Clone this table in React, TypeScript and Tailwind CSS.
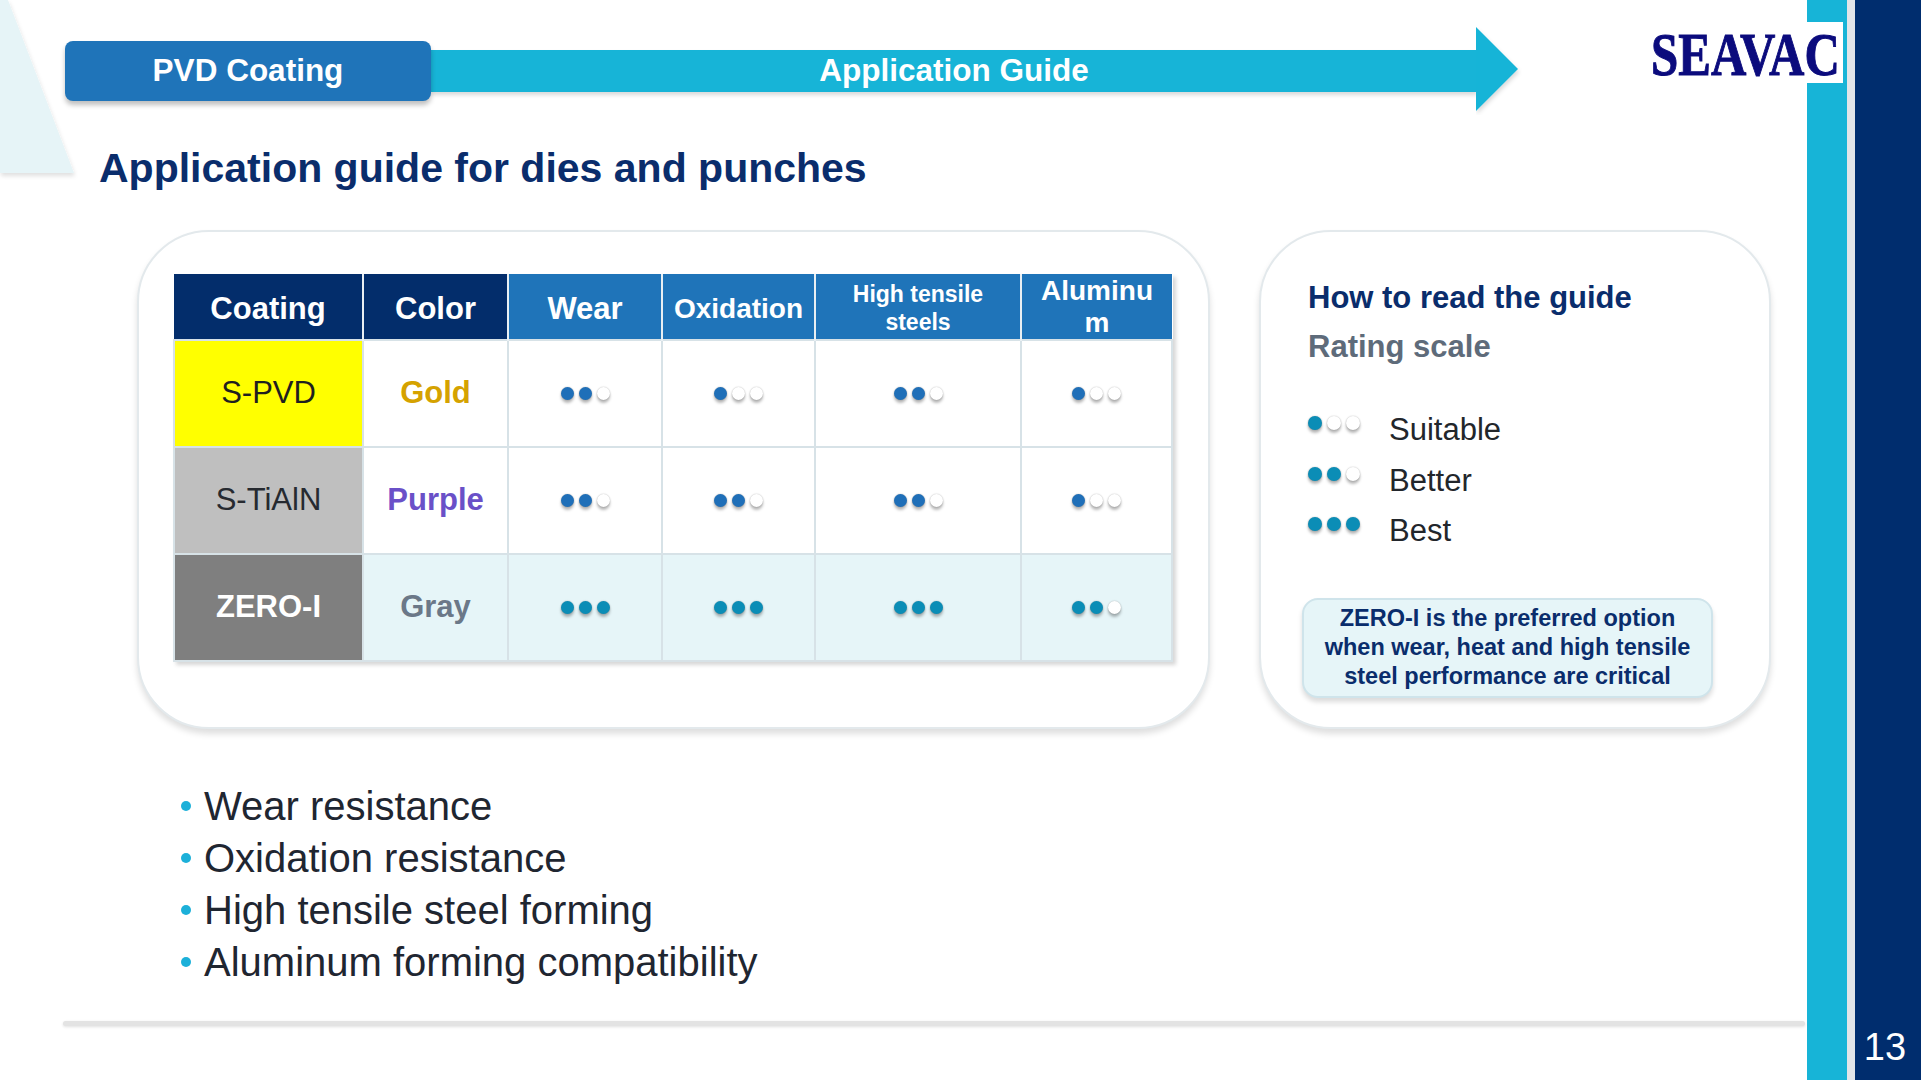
import React from 'react';

type Rating = 1 | 2 | 3;
type Tone = 'blue' | 'teal';

interface CoatingRow {
  name: string;
  nameCls: string;
  color: string;
  colorCls: string;
  cellBg: string;
  ratings: Rating[];
  tone: Tone;
}

const ROWS: CoatingRow[] = [
  {
    name: 'S-PVD',
    nameCls: 'bg-[#ffff00] text-[#1f1f1f] font-normal',
    color: 'Gold',
    colorCls: 'text-[#d5a200]',
    cellBg: 'bg-white',
    ratings: [2, 1, 2, 1],
    tone: 'blue',
  },
  {
    name: 'S-TiAlN',
    nameCls: 'bg-[#bfbfbf] text-[#262a30] font-normal',
    color: 'Purple',
    colorCls: 'text-[#6a50c8]',
    cellBg: 'bg-white',
    ratings: [2, 2, 2, 1],
    tone: 'blue',
  },
  {
    name: 'ZERO-I',
    nameCls: 'bg-[#7f7f7f] text-white font-bold',
    color: 'Gray',
    colorCls: 'text-[#6b7888]',
    cellBg: 'bg-[#e6f5f8]',
    ratings: [3, 3, 3, 2],
    tone: 'teal',
  },
];

const BULLETS = [
  'Wear resistance',
  'Oxidation resistance',
  'High tensile steel forming',
  'Aluminum forming compatibility',
];

// white (empty) dots need a halo or they vanish on the white cells
const dotShadow = 'shadow-[0_3px_3px_rgba(0,0,0,0.28),0_0_1.5px_rgba(0,0,0,0.3)]';

const Dots = ({ value, tone }: { value: Rating; tone: Tone }) => (
  <div className="flex items-center justify-center gap-[5px]">
    {[1, 2, 3].map((i) => (
      <span
        key={i}
        className={`block w-[13px] h-[13px] rounded-full ${dotShadow} ${
          i > value ? 'bg-white' : tone === 'blue' ? 'bg-[#1f6fb8]' : 'bg-[#0b8db6]'
        }`}
      />
    ))}
  </div>
);

const GuideTable = () => (
  <table className="table-fixed border-collapse shadow-[3px_3px_4px_rgba(0,0,0,0.16)]">
    <colgroup>
      <col className="w-[189px]" />
      <col className="w-[145px]" />
      <col className="w-[154px]" />
      <col className="w-[153px]" />
      <col className="w-[206px]" />
      <col className="w-[151px]" />
    </colgroup>
    <thead>
      <tr className="h-[60px] text-white font-bold">
        <th className="bg-[#032d6b] text-[31px] leading-none pt-[4px]">Coating</th>
        <th className="bg-[#032d6b] text-[31px] leading-none pt-[4px] border-l-2 border-[#e9eff3]">Color</th>
        <th className="bg-[#1f74b9] text-[31px] leading-none pt-[4px] border-l-2 border-[#e9eff3]">Wear</th>
        <th className="bg-[#1f74b9] text-[28px] leading-none pt-[4px] border-l-2 border-[#e9eff3]">Oxidation</th>
        <th className="bg-[#1f74b9] text-[23px] leading-[28px] pt-[2px] border-l-2 border-[#e9eff3]">
          High tensile
          <br />
          steels
        </th>
        <th className="bg-[#1f74b9] text-[28px] leading-[32px] pt-[1px] border-l-2 border-[#e9eff3]">
          Aluminu
          <br />m
        </th>
      </tr>
    </thead>
    <tbody>
      {ROWS.map((row) => (
        <tr key={row.name} className="h-[107px]">
          <td className={`text-center text-[31px] border-2 border-[#d7e2e7] ${row.nameCls}`}>{row.name}</td>
          <td className={`text-center text-[31px] font-bold border-2 border-[#d7e2e7] ${row.cellBg} ${row.colorCls}`}>
            {row.color}
          </td>
          {row.ratings.map((r, idx) => (
            <td key={idx} className={`border-2 border-[#d7e2e7] ${row.cellBg}`}>
              <Dots value={r} tone={row.tone} />
            </td>
          ))}
        </tr>
      ))}
    </tbody>
  </table>
);

const LegendRow = ({ value, label }: { value: Rating; label: string }) => (
  <div className="flex items-start h-[50.5px]">
    <div className="w-[81px] pt-[5px]">
      <div className="flex items-center gap-[5px]">
        {[1, 2, 3].map((i) => (
          <span
            key={i}
            className={`block w-[14px] h-[14px] rounded-full ${dotShadow} ${
              i <= value ? 'bg-[#0b8db6]' : 'bg-white'
            }`}
          />
        ))}
      </div>
    </div>
    <span className="text-[31px] leading-[37px] text-[#22262b]">{label}</span>
  </div>
);

export default function App() {
  return (
    <div className="relative w-[1921px] h-[1080px] bg-white overflow-hidden flex font-['Liberation_Sans',Arial,sans-serif]">
      {/* decorative corner wedge */}
      <svg className="absolute top-0 left-0" width="90" height="185" viewBox="0 0 90 185">
        <defs>
          <filter id="wedge-shadow" x="-20%" y="-10%" width="140%" height="130%">
            <feDropShadow dx="1" dy="3" stdDeviation="2" floodColor="#000" floodOpacity="0.12" />
          </filter>
        </defs>
        <polygon points="0,0 8,0 74,173 0,173" fill="#e6f4f7" filter="url(#wedge-shadow)" />
      </svg>

      {/* main slide area */}
      <div className="w-[1807px] flex flex-col">
        {/* header band */}
        <div className="flex items-center h-[84px] mt-[29px] pl-[65px]">
          <div className="w-[366px] h-[60px] rounded-[8px] bg-[#1f74b9] flex items-center justify-center text-white font-bold text-[31.5px] shadow-[0_4px_5px_rgba(0,0,0,0.25)] relative z-10">
            PVD Coating
          </div>
          <div className="w-[1046px] h-[42px] bg-[#17b4d7] flex items-center justify-center text-white font-bold text-[31.5px] shadow-[0_3px_4px_rgba(0,0,0,0.15)]">
            Application Guide
          </div>
          <svg width="46" height="88" viewBox="0 0 46 88" className="-ml-px">
            <defs>
              <filter id="arrow-shadow" x="-20%" y="-10%" width="150%" height="130%">
                <feDropShadow dx="1" dy="3" stdDeviation="2" floodColor="#000" floodOpacity="0.15" />
              </filter>
            </defs>
            <polygon points="0,0 42,42 0,84" fill="#17b4d7" filter="url(#arrow-shadow)" />
          </svg>
        </div>

        <h1 className="mt-[31px] ml-[99px] text-[41px] leading-[48px] font-bold text-[#0a2d6c]">
          Application guide for dies and punches
        </h1>

        {/* cards */}
        <div className="flex mt-[38px] ml-[137px] gap-[49px]">
          <div className="w-[1073px] h-[499px] rounded-[72px] border-2 border-[#e3e9ec] bg-white shadow-[0_5px_6px_rgba(0,0,0,0.13)] pt-[42px] pl-[34px]">
            <GuideTable />
          </div>

          <div className="w-[512px] h-[499px] rounded-[72px] border-2 border-[#e3e9ec] bg-white shadow-[0_5px_6px_rgba(0,0,0,0.13)] pt-[47px] pl-[47px] flex flex-col">
            <div className="text-[31px] leading-[37px] font-bold text-[#0a2d6c]">How to read the guide</div>
            <div className="mt-[12px] text-[31px] leading-[37px] font-bold text-[#5e6b7a]">Rating scale</div>
            <div className="mt-[46px] flex flex-col">
              <LegendRow value={1} label="Suitable" />
              <LegendRow value={2} label="Better" />
              <LegendRow value={3} label="Best" />
            </div>
            <div className="mt-[35px] -ml-[6px] w-[411px] h-[100px] rounded-[16px] border-2 border-[#cfe4eb] bg-[#e6f5f8] shadow-[0_4px_5px_rgba(0,0,0,0.14)] flex items-center justify-center text-center text-[23.5px] leading-[29px] font-bold text-[#0a2d6c]">
              ZERO-I is the preferred option
              <br />
              when wear, heat and high tensile
              <br />
              steel performance are critical
            </div>
          </div>
        </div>

        {/* bullet list */}
        <ul className="mt-[51px] ml-[181px] flex flex-col">
          {BULLETS.map((b) => (
            <li key={b} className="flex items-center h-[52px]">
              <span className="w-[10px] h-[10px] rounded-full bg-[#1cb0d9]" />
              <span className="ml-[13px] text-[40px] leading-[52px] text-[#1f2631]">{b}</span>
            </li>
          ))}
        </ul>

        <div className="mt-[33px] ml-[63px] mr-[2px] h-[5px] rounded-full bg-[#e3e3e3] shadow-[0_1px_3px_rgba(0,0,0,0.12)]" />
      </div>

      {/* right edge stripes */}
      <div className="w-[40px] h-full bg-[#17b4d7]" />
      <div className="w-[8px] h-full bg-[#e2e5e8]" />
      <div className="flex-1 h-full bg-[#002d6e] flex flex-col justify-end items-center pb-[10px] pr-[6px]">
        <span className="text-white text-[38px] leading-[46px]">13</span>
      </div>

      {/* logo badge over the stripe */}
      <div className="absolute top-[22px] left-[1643px] w-[200px] h-[61px] bg-white">
        <span className="absolute left-[8px] top-[1px] origin-left scale-x-[0.79] text-[62px] leading-[62px] font-bold text-[#0b0b7d] font-['Liberation_Serif',serif] whitespace-nowrap [-webkit-text-stroke:1px_#0b0b7d]">
          SEAVAC
        </span>
      </div>
    </div>
  );
}
